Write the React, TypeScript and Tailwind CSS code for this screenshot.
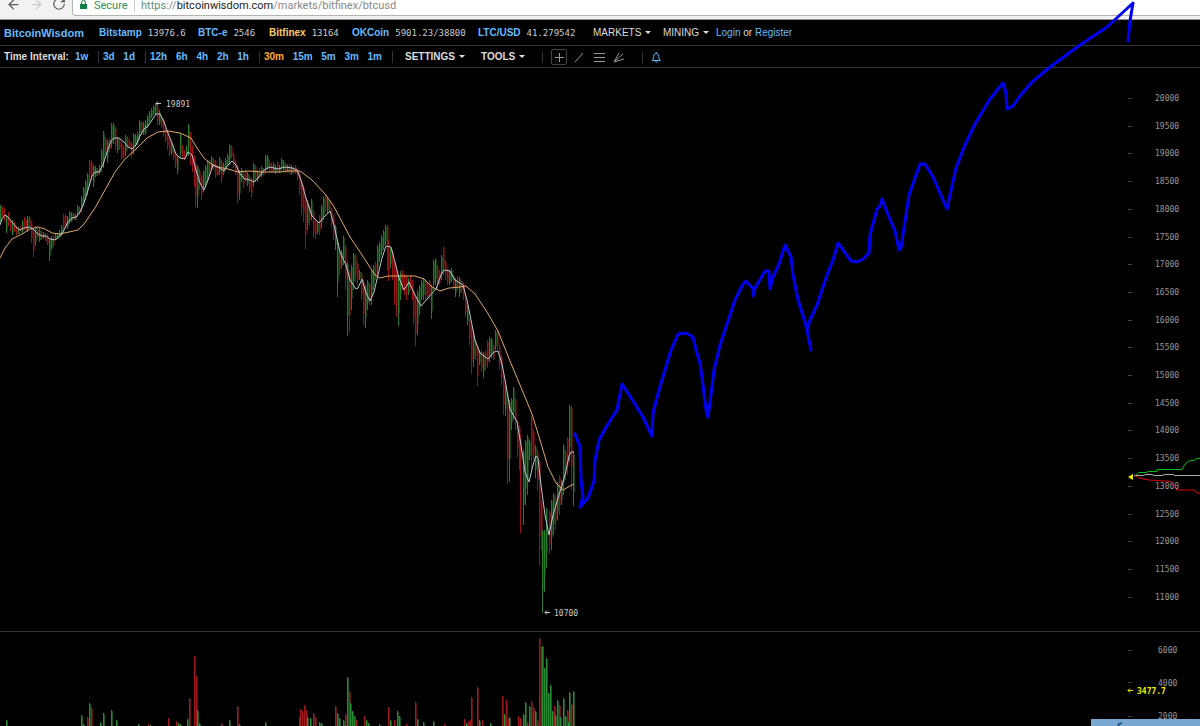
import { ArrowLeft, ArrowRight, RotateCw } from 'lucide-react';

const MARKETS = [
  { name: 'Bitstamp', price: '13976.6', width: 'w-[99px]' },
  { name: 'BTC-e', price: '2546', width: 'w-[71px]' },
  { name: 'Bitfinex', price: '13164', width: 'w-[83px]', active: true },
  { name: 'OKCoin', price: '5901.23/38800', width: 'w-[126px]' },
  { name: 'LTC/USD', price: '41.279542', width: 'w-[115px]' },
];

const INTERVALS = [
  { items: ['1w'], width: 'w-[23px]' },
  { items: ['3d', '1d'], width: 'w-[42px]' },
  { items: ['12h', '6h', '4h', '2h', '1h'], width: 'w-[109px]' },
  { items: ['30m', '15m', '5m', '3m', '1m'], width: 'w-[128px]' },
];

// x, high, low, direction
const CANDLES = `
0 205 222 g,2 206 217 r,4 208 222 r,6 215 233 g,8 212 226 r,10 220 231 r,12 220 235 g,14 222 232 r,16 226 235 r,18 227 234 g,
20 226 231 r,22 220 233 g,24 217 230 r,26 220 230 r,27 216 232 g,29 216 227 r,31 221 243 r,33 230 257 r,35 226 246 g,37 228 238 r,
39 228 242 g,41 231 240 r,43 232 238 g,45 233 241 r,47 234 245 r,49 238 261 g,51 236 250 g,53 235 247 r,55 233 240 g,57 233 238 g,
59 230 237 g,61 225 236 g,63 214 233 r,65 214 228 r,67 216 229 g,69 211 224 g,71 212 222 g,73 212 220 r,75 214 220 g,77 205 217 g,
79 206 215 r,81 196 212 g,83 187 206 g,85 180 200 g,87 173 195 g,89 160 187 r,91 160 180 r,93 165 187 g,95 166 177 g,97 168 176 r,
99 165 174 g,101 149 172 g,103 131 168 g,105 137 155 r,107 140 163 g,109 138 152 r,111 123 148 g,113 123 144 g,115 127 150 r,117 137 153 g,
119 138 150 r,121 142 160 r,123 145 159 r,125 135 156 g,127 136 150 r,129 140 148 r,131 142 158 r,133 133 154 g,135 134 147 g,137 132 145 g,
139 120 140 g,141 121 135 r,143 122 135 g,145 120 135 g,147 115 128 g,149 111 122 g,151 108 118 g,153 105 115 g,155 104 115 g,157 105 125 r,
159 110 125 g,161 115 128 r,163 118 137 r,165 128 142 r,167 130 150 r,169 138 156 r,171 142 155 g,173 148 160 r,175 152 168 r,177 155 174 g,
180 133 158 g,182 145 158 r,184 150 160 r,186 146 155 g,188 124 156 g,190 132 165 r,192 145 172 r,194 155 187 r,195 162 207 r,197 165 208 g,
199 169 190 r,201 175 200 r,203 170 192 g,205 165 188 g,207 160 182 g,209 160 175 r,211 156 170 g,213 158 170 r,215 160 178 r,217 165 176 r,
219 157 175 g,221 160 183 r,223 163 175 g,225 158 170 g,227 154 165 g,229 144 165 g,231 145 158 r,233 153 168 r,235 160 175 r,237 165 203 r,
239 170 200 g,241 168 182 g,243 172 188 r,245 170 182 r,247 172 186 g,249 175 192 r,251 178 197 r,253 163 187 g,255 165 182 r,257 170 182 g,
259 168 178 r,261 166 177 g,263 168 175 r,265 155 172 g,267 155 170 g,269 160 172 r,271 163 173 r,273 162 172 g,275 165 174 g,277 161 172 r,
279 165 173 g,281 158 170 g,283 160 172 g,285 163 173 r,287 164 172 g,289 163 174 r,291 165 175 g,293 166 173 r,295 165 174 r,297 168 180 r,
299 172 195 r,301 180 215 r,303 185 222 r,305 197 249 r,307 200 230 g,309 205 225 r,311 199 220 g,313 210 238 r,315 220 239 r,317 222 234 g,
319 215 235 r,321 205 228 g,323 196 220 g,325 194 212 r,327 198 214 g,329 200 212 r,331 208 228 r,333 215 240 r,335 225 250 g,337 240 297 g,
339 252 275 r,341 250 268 g,343 236 265 g,345 245 290 r,347 262 336 g,349 270 332 r,351 265 310 g,353 253 290 g,355 254 282 r,357 262 285 r,
359 270 280 g,361 272 300 r,363 280 325 r,365 285 328 g,367 280 310 g,369 283 305 r,371 270 305 g,373 265 290 g,375 262 280 r,377 245 275 g,
379 242 262 g,381 235 255 g,383 230 250 g,385 225 245 g,387 225 270 r,388 240 281 r,390 248 268 g,392 250 280 r,394 262 305 r,396 270 317 r,
398 275 326 g,400 271 300 g,402 270 290 r,404 274 295 r,406 275 300 r,408 278 295 g,410 275 290 r,412 280 300 r,413 290 325 r,415 295 346 r,
417 290 335 g,419 285 315 g,421 280 300 g,423 278 300 g,425 280 300 r,427 283 300 r,429 280 298 r,431 285 319 g,433 260 290 g,435 258 285 g,
437 265 290 r,439 270 285 r,441 255 280 g,443 246 275 r,445 260 280 r,447 268 285 r,449 270 285 g,451 268 282 g,453 275 290 r,455 278 297 g,
457 276 290 r,459 277 297 g,461 280 293 r,463 282 300 r,465 295 317 r,467 305 325 g,469 318 345 r,471 325 374 r,473 333 367 g,475 340 360 r,
477 345 386 r,479 350 365 g,481 350 372 r,483 352 378 g,485 350 370 r,487 340 368 r,489 337 362 g,491 338 358 g,493 345 360 r,495 330 350 g,
497 329 350 r,499 345 370 r,501 355 385 r,503 375 415 r,505 385 416 g,507 395 484 r,509 400 482 g,511 398 430 g,513 387 420 g,515 398 430 r,
517 420 457 r,519 425 470 r,520 435 533 r,523 450 525 g,525 440 505 g,527 435 495 g,529 440 460 g,531 416 470 r,533 430 460 r,535 445 478 g,
537 450 490 r,539 460 565 r,541 500 550 r,542 530 613 g,544 530 592 g,546 508 568 g,549 510 554 r,551 500 550 g,553 493 535 g,555 495 530 r,
557 482 520 g,559 475 515 r,561 480 505 g,563 444 495 g,565 450 480 r,567 437 475 r,569 405 462 g,571 406 490 r,573 452 506 g`;

// x, bar height, direction
const VOLUMES = `
6 6 g,81 11 g,83 2 g,87 9 r,89 23 g,91 19 r,100 4 g,103 13 g,111 16 g,116 6 g,138 2 g,148 2 r,150 1 g,168 8 r,176 5 r,178 3 g,180 2 g,
187 7 g,189 28 r,194 70 r,196 50 r,197 16 g,199 3 g,221 3 r,229 6 g,237 20 r,239 2 g,265 4 g,299 9 r,300 17 r,302 15 r,304 21 r,306 16 r,
307 9 g,310 8 g,313 13 r,315 9 r,319 4 g,321 3 g,335 20 r,337 13 g,339 8 g,343 6 g,345 12 r,347 49 g,349 35 r,350 23 g,352 15 g,354 10 g,
356 6 r,364 10 r,366 6 g,368 3 g,379 2 g,388 19 r,390 6 g,394 6 r,397 15 g,399 10 g,406 2 r,415 24 r,417 7 g,423 4 g,433 5 g,444 2 r,464 7 r,
466 3 g,468 5 r,470 6 r,471 29 r,477 39 r,479 6 g,482 6 r,490 3 g,502 30 r,504 12 g,506 26 r,508 7 r,509 9 g,518 10 r,520 8 r,523 12 g,
525 24 g,527 4 r,529 20 g,531 25 r,533 19 r,535 15 g,537 6 r,539 88 r,541 79 r,542 80 g,544 58 g,546 68 g,548 33 g,549 32 r,550 41 g,552 15 g,
554 20 r,555 11 g,557 26 g,559 21 r,560 9 g,563 28 g,565 10 g,567 16 r,568 4 g,569 34 g,571 22 r,573 35 g`;

const FAST_MA =
  '0,225 2,219 5,215 8,217 12,222 16,227 20,230 24,228 30,227 34,230 38,234 42,236 46,236 50,239 55,240 60,236 64,230 68,222 72,218 76,217 80,212 84,203 88,190 92,176 95,172 99,172 103,165 107,152 111,141 114,138 119,138 124,142 128,147 132,149 136,145 140,136 144,129 148,126 152,120 156,114 160,114 164,122 168,133 172,143 176,154 180,158 185,159 188,152 192,155 196,170 200,183 204,190 208,180 213,165 218,167 224,171 228,165 232,161 236,165 240,174 245,179 250,180 254,182 258,178 264,170 270,167 278,169 285,167 292,168 297,170 301,180 306,198 312,216 319,223 325,216 330,211 334,225 340,252 346,265 350,280 356,289 358,288 362,279 366,293 370,301 374,292 378,275 382,258 386,246 391,247 395,262 399,278 404,290 409,282 415,295 421,306 428,298 436,289 441,275 444,270 450,271 455,280 463,285 467,300 471,320 475,340 480,353 488,359 494,352 498,351 502,364 506,385 510,409 517,422 521,445 525,472 529,482 533,465 536,456 538,458 541,485 545,515 549,535 553,515 559,495 565,475 569,456 571,452 574,452';

const SLOW_MA =
  '0,258 5,248 12,239 22,234 30,229 38,227 45,229 52,233 60,234 78,230 84,224 95,208 105,190 115,172 125,159 135,150 147,138 158,132 168,131 180,133 191,138 197,148 204,158 210,163 217,167 228,169 238,172 248,171 262,172 280,172 288,171 300,171 312,180 325,194 333,205 340,218 350,237 362,255 375,275 380,278 388,276 415,276 424,279 432,287 440,291 449,288 460,287 466,286 475,294 487,312 498,331 510,361 520,385 532,414 540,440 548,467 556,483 563,490 570,486 574,484';

const FORECAST =
  '575,434 580,447 581,480 583,497 580,507 588,498 594,481 595,460 599,440 608,424 617,410 622,384 633,401 643,417 652,436 653,413 659,390 665,370 671,350 678,334 686,333 693,337 696,350 700,363 703,385 706,410 708,417 711,395 714,370 720,345 727,324 735,300 743,284 746,281 754,290 753,296 755,288 765,271 769,271 770,289 773,277 779,264 785,245 791,257 793,275 798,300 805,322 808,335 811,350 807,330 810,320 817,305 827,275 833,260 838,243 851,261 857,262 863,259 869,253 870,235 877,209 880,206 882,199 889,217 895,231 899,250 901,248 904,228 909,195 920,164 925,164 933,177 947,209 950,195 956,168 965,145 975,124 990,99 1003,83 1006,93 1007,109 1013,106 1020,96 1032,82 1050,67 1080,45 1107,27 1133,3 1130,21 1128,41';

const PRICES = Array.from({ length: 19 }, (_, i) => 20000 - i * 500);

const candles = CANDLES.trim().split(',').map((row) => {
  const [x, high, low, dir] = row.trim().split(' ');
  return { x: Number(x), high: Number(high), low: Number(low), up: dir === 'g' };
});

const volumes = VOLUMES.trim().split(',').map((row) => {
  const [x, size, dir] = row.trim().split(' ');
  return { x: Number(x), size: Number(size), up: dir === 'g' };
});

function Caret() {
  return <span className="h-0 w-0 border-x-3 border-t-3 border-x-transparent border-t-[#ddd]" />;
}

function Separator() {
  return <span className="h-3 w-px shrink-0 bg-[#333]" />;
}

function BrowserBar() {
  return (
    <div className="flex h-5 shrink-0 border-b border-[#8f938f] bg-[#f2f2f2]">
      <div className="flex w-[72px] shrink-0 gap-2 overflow-hidden pl-1.5 text-[#5a5a5a]">
        <button aria-label="Back" className="h-3"><ArrowLeft size={15} strokeWidth={2} className="-mt-1" /></button>
        <button aria-label="Forward" className="h-3 text-[#c9c9c9]"><ArrowRight size={15} strokeWidth={2} className="-mt-1" /></button>
        <button aria-label="Reload" className="h-3"><RotateCw size={14} strokeWidth={2} className="-mt-1" /></button>
      </div>
      <div className="flex h-4 flex-1 items-start rounded-bl-sm border-b border-l border-[#b0b5b0] bg-white pl-1.5 font-[Roboto,sans-serif] text-[11px] leading-3 whitespace-nowrap">
        <svg width="9" height="10" viewBox="0 0 9 10" className="shrink-0">
          <path d="M2.500 5V2.500a2 2 0 0 1 4 0V5" fill="none" stroke="#0b8043" />
          <path d="M1 4h7v5h-7z" fill="#0b8043" />
        </svg>
        <span className="w-[46px] pl-1.5 text-[#2f8f5b]">Secure</span>
        <span className="mr-1.5 h-3 w-px bg-[#ccc]" />
        <a href="https://bitcoinwisdom.com/markets/bitfinex/btcusd" className="text-[#888]">
          <span className="text-[#5c8f74]">https</span>://<span className="text-[#222]">bitcoinwisdom.com</span>/markets/bitfinex/btcusd
        </a>
      </div>
    </div>
  );
}

function MarketNav() {
  return (
    <nav className="flex h-[26px] shrink-0 items-center border-b border-[#333] pl-1 whitespace-nowrap">
      <a href="#home" className="w-[95px] shrink-0 text-[11px] font-bold text-[#6bf]">BitcoinWisdom</a>
      {MARKETS.map((m) => (
        <a key={m.name} href={`#${m.name}`} className={`flex shrink-0 items-center gap-1.5 ${m.width}`}>
          <span className={m.active ? 'font-bold text-[#fc6]' : 'font-bold text-[#6bf]'}>{m.name}</span>
          <span className="font-['DejaVu_Sans_Mono',monospace] text-[9px] text-[#ccc]">{m.price}</span>
        </a>
      ))}
      <button className="flex w-[70px] shrink-0 items-center gap-1">MARKETS <Caret /></button>
      <button className="flex w-[53px] shrink-0 items-center gap-1">MINING <Caret /></button>
      <span>
        <a href="#login" className="text-[#6bf]">Login</a> or <a href="#register" className="text-[#6bf]">Register</a>
      </span>
    </nav>
  );
}

function Toolbar() {
  return (
    <div className="flex h-[22px] shrink-0 items-center border-b border-[#333] pl-1 font-bold whitespace-nowrap">
      <span className="w-[71px] shrink-0">Time Interval:</span>
      {INTERVALS.map((group) => (
        <div key={group.width} className="flex shrink-0 items-center">
          <div className={`flex justify-between pr-2.5 ${group.width}`}>
            {group.items.map((label) => (
              <button key={label} className={label === '30m' ? 'text-[#fa3]' : 'text-[#6bf]'}>{label}</button>
            ))}
          </div>
          <Separator />
          <span className="w-1" />
        </div>
      ))}
      <button className="ml-2 flex w-[76px] shrink-0 items-center gap-1">SETTINGS <Caret /></button>
      <button className="flex w-[61px] shrink-0 items-center gap-1">TOOLS <Caret /></button>
      <Separator />
      <div className="flex w-[99px] shrink-0 items-center gap-1 pl-2 text-[#999]">
        <button aria-label="Crosshair" className="rounded-xs border border-[#444]">
          <svg width="14" height="14" viewBox="0 0 14 14" stroke="currentColor"><path d="M7.5 3v9M3 7.5h9" /></svg>
        </button>
        <button aria-label="Trend line">
          <svg width="16" height="14" viewBox="0 0 16 14" stroke="currentColor"><path d="M4 12L12 3" /></svg>
        </button>
        <button aria-label="Horizontal lines">
          <svg width="16" height="14" viewBox="0 0 16 14" stroke="currentColor"><path d="M3 3.5h11M3 7.5h11M3 11.5h11" /></svg>
        </button>
        <button aria-label="Fan lines">
          <svg width="16" height="14" viewBox="0 0 16 14" stroke="currentColor"><path d="M3 12L8 3M3 12L12 4M3 12L13 9" /></svg>
        </button>
      </div>
      <Separator />
      <button aria-label="Alerts" className="ml-2 text-[#6bf]">
        <svg width="11" height="12" viewBox="0 0 11 12" fill="none" stroke="currentColor">
          <path d="M1 9.500C3 8 2.500 6 3 4C3.500 2 7 2 7.500 4C8 6 7.500 8 9.500 9.500ZM5.200 2.500V1M4 10.500C4.500 11.500 6 11.500 6.500 10.500" />
        </svg>
      </button>
    </div>
  );
}

function PriceChart() {
  return (
    <section className="flex h-[564px] shrink-0 justify-between border-b border-[#333]">
      <svg className="shrink-0" width="600" height="563" viewBox="0 68 600 563">
        {candles.map((c) => (
          <g key={c.x} shapeRendering="crispEdges">
            <rect x={c.x} y={c.high} width="1" height={c.low - c.high} fill={c.up ? '#267a2e' : '#961216'} />
            <rect x={c.x + 1} y={c.high + 2} width="1" height={(c.low - c.high) * 0.7} fill={c.up ? '#123f16' : '#500a0c'} />
          </g>
        ))}
        <polyline points={SLOW_MA} fill="none" stroke="#e0a868" />
        <polyline points={FAST_MA} fill="none" stroke="#b9c6d2" />
        <g fill="#ccc" className="font-['DejaVu_Sans_Mono',monospace] text-[8px]">
          <path d="M161 103.500h-5M158 101.500l-2 2l2 2M550 612.500h-5M547 610.500l-2 2l2 2" fill="none" stroke="#ccc" />
          <text x="166" y="107">19891</text>
          <text x="554" y="616">10700</text>
        </g>
      </svg>
      <svg className="shrink-0" width="73" height="563" viewBox="1127 68 73 563">
        <g fill="#999" className="font-['DejaVu_Sans_Mono',monospace] text-[8px]">
          {PRICES.map((price, i) => (
            <g key={price}>
              <path d={`M1128 ${Math.round(98 + i * 27.7)}.5h4`} stroke="#444" />
              <text x="1155" y={Math.round(101 + i * 27.7)}>{price}</text>
            </g>
          ))}
        </g>
        <path d="M1128 477l5-3v6z" fill="#ee0" />
        <g fill="none">
          <path d="M1134 475.500H1143L1146 474.500H1152L1154 475.500H1162L1165 474.500H1173L1175 475.500H1200" stroke="#aaa" />
          <path d="M1135 476L1139 472.500H1146L1148 471.500H1157V469.500H1182L1185 464L1189 461L1195 460L1197 458.500H1200" stroke="#0b1" />
          <path d="M1135 476L1141 478.500L1149 480L1158 480.500L1171 481.500L1173 485.500L1177 490H1194L1197 493H1200" stroke="#d00" />
        </g>
      </svg>
    </section>
  );
}

function VolumeChart() {
  return (
    <section className="flex h-[94px] justify-between">
      <svg className="shrink-0" width="600" height="94" viewBox="0 632 600 94" shapeRendering="crispEdges">
        {volumes.map((v) => (
          <g key={v.x} fill={v.up ? '#2b8a35' : '#9c1a1e'}>
            <rect x={v.x} y={726 - v.size} width="1" height={v.size} />
            <rect x={v.x + 1} y={727 - v.size} width="1" height={v.size} opacity="0.6" />
          </g>
        ))}
      </svg>
      <svg className="shrink-0" width="109" height="94" viewBox="1091 632 109 94">
        <g fill="#999" className="font-['DejaVu_Sans_Mono',monospace] text-[8px]">
          <path d="M1128 650.500h4M1128 682.500h4M1128 716.500h4" stroke="#444" />
          <text x="1158" y="653">6000</text>
          <text x="1158" y="686">4000</text>
          <text x="1158" y="719">2000</text>
          <path d="M1133 690.500h-5M1130 688.500l-2 2l2 2" fill="none" stroke="#ee0" />
          <text x="1137" y="694" fill="#ee0" className="font-bold">3477.7</text>
        </g>
        <rect x="1091" y="719" width="109" height="7" fill="#7aa7d2" />
        <path d="M1118 726L1119 724L1122 723" fill="none" stroke="#1c5a94" strokeWidth="2" />
      </svg>
    </section>
  );
}

export default function App() {
  return (
    <main className="relative flex min-h-screen flex-col overflow-hidden bg-black font-['Liberation_Sans',sans-serif] text-[10px] leading-3 text-[#ddd]">
      <BrowserBar />
      <MarketNav />
      <Toolbar />
      <PriceChart />
      <VolumeChart />
      {/* freehand forecast drawn over the whole window */}
      <svg className="pointer-events-none absolute top-0 left-0" width="1200" height="726" viewBox="0 0 1200 726">
        <polyline points={FORECAST} fill="none" stroke="#0000f0" strokeWidth="3" strokeLinecap="round" strokeLinejoin="round" />
      </svg>
    </main>
  );
}
